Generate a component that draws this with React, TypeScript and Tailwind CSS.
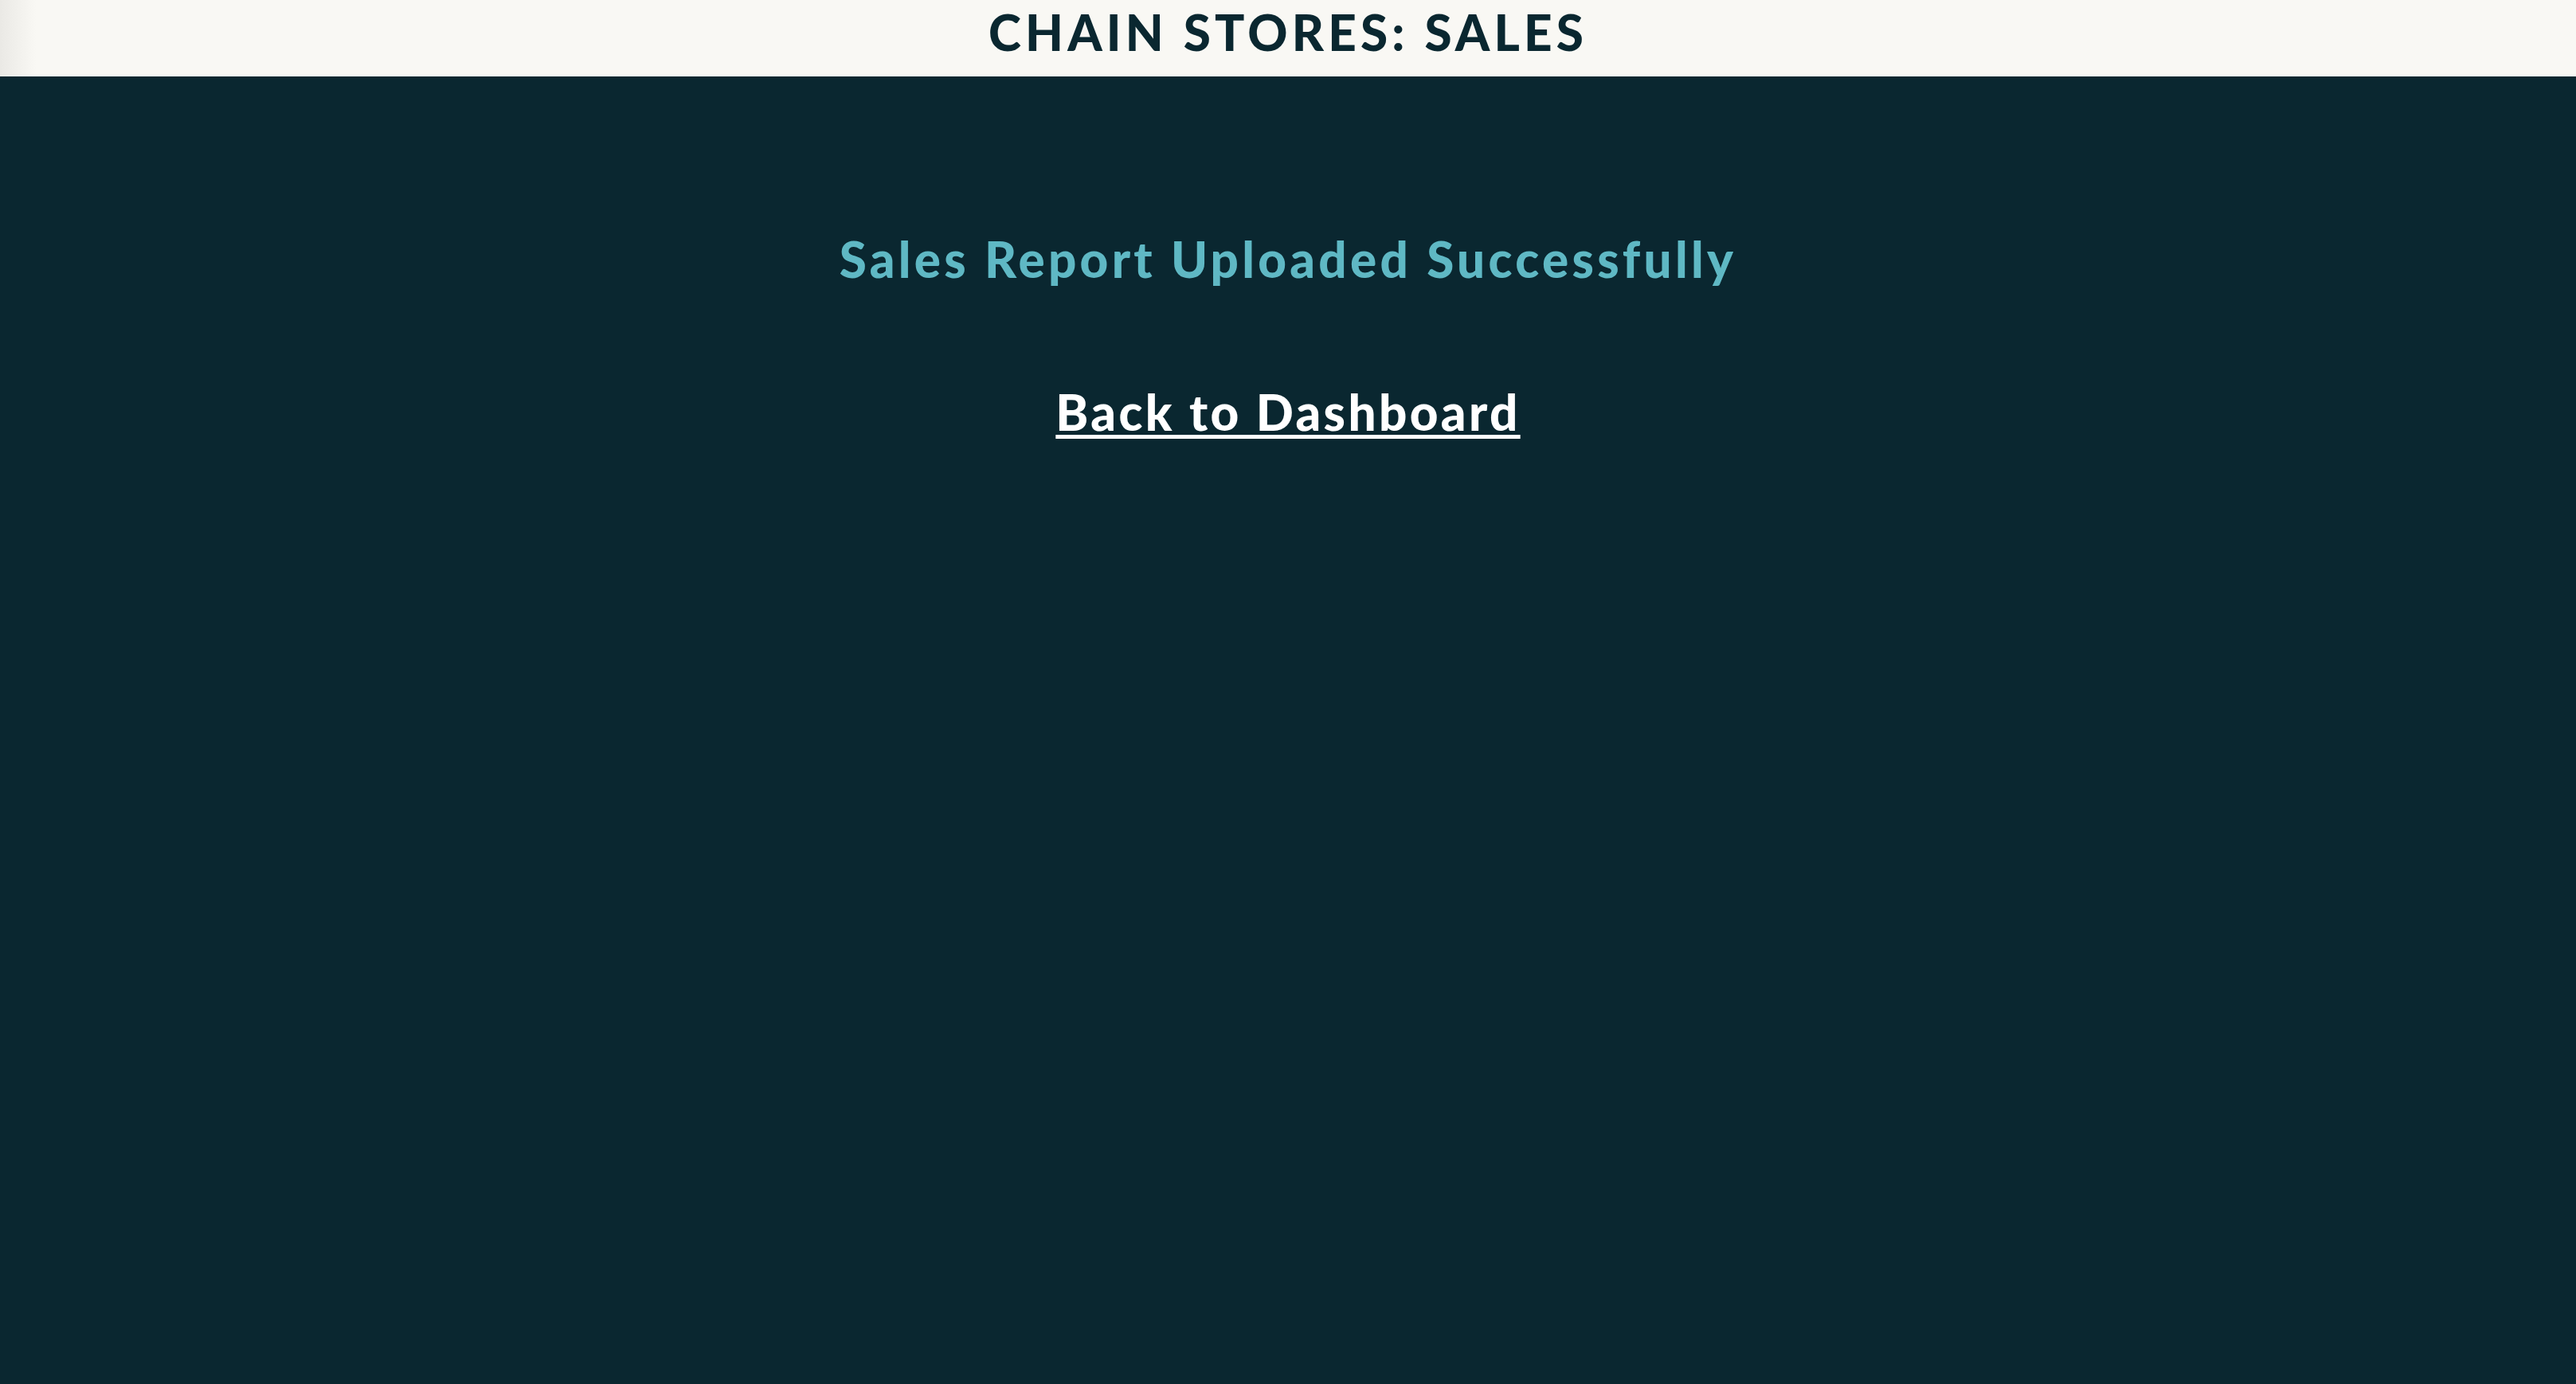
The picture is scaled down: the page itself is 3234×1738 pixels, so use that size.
export default function App() {
  return (
    <div className="min-h-screen bg-[#0a2730] font-['Lato','Liberation_Sans',sans-serif]">
      <header className="flex h-[96px] justify-center bg-[linear-gradient(to_right,#eae9e5,#f9f8f4_45px)] pt-[3px]">
        <h2 className="text-[62px] leading-[1.2] font-black tracking-[0.083em] text-[#0a2730]">
          CHAIN STORES: SALES
        </h2>
      </header>

      <main className="flex flex-col items-center pt-[192px] text-center">
        <h1 className="text-[62px] leading-[1.2] font-black tracking-[0.069em] text-[#5fb8c4]">
          Sales Report Uploaded Successfully
        </h1>
        <a
          href="#"
          className="mt-[118px] text-[62px] leading-[1.2] font-black tracking-[0.054em] text-white underline decoration-[5px] underline-offset-[5px]"
        >
          Back to Dashboard
        </a>
      </main>
    </div>
  );
}
